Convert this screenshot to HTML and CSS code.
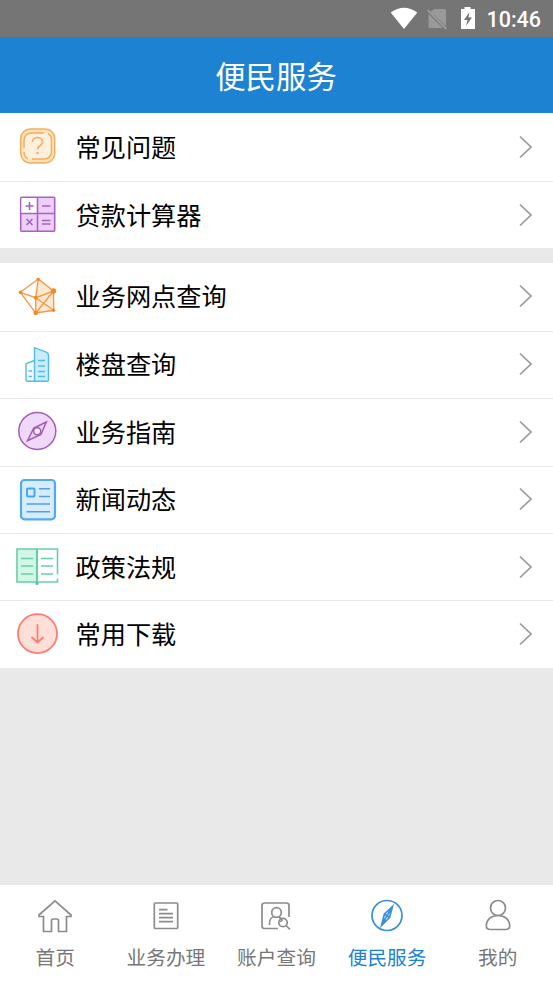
FILE: index.html
```html
<!DOCTYPE html>
<html lang="zh-CN">
<head>
<meta charset="utf-8">
<meta name="viewport" content="width=device-width, initial-scale=1">
<title>便民服务</title>
<link rel="stylesheet" href="styles.css">
</head>
<body>
<div class="app">
  <div class="status">
    <svg class="status-icons" viewBox="0 0 90 37">
      <path fill="#fff" d="M.7 12.500Q14 3 27.300 12.500L14 29z"/>
      <path fill="#999" d="M45 9h9.500q1.500 0 1.500 1.500V26L40 11.500zM38.500 14L53 28H40q-1.500 0-1.500-1.500z"/>
      <path d="M37.500 10l19 19" stroke="#999" stroke-width="2"/>
      <path fill="#fff" d="M74.500 7h6v2h4.500v20H71V9h3.500z"/>
      <path fill="#757575" d="M79.500 12L74 20h3.500l-1.500 6 6-8.500h-3.500z"/>
    </svg>
    <span class="clock">10:46</span>
  </div>
  <header class="header"><h1>便民服务</h1></header>

  <main class="content">
    <section class="group">
      <a class="row">
        <svg class="icon" viewBox="0 0 76 67.500" stroke="#f5ad62" stroke-width="1.500">
          <rect x="20.700" y="16" width="34" height="34" rx="9.500" fill="#ffe3b5"/>
          <path fill="#fff0de" d="M31 20h17q3.500 0 3.500 4v13q0 9-8 9H28q-4 0-4-4V28q0-8 7-8z" stroke="none"/>
          <path d="M24 35v-7q0-8 8-8h12M48 21q3.500 1 3.500 6v11q0 8-8 8H32M28 45.500q-4-1-4-6.500"/>
          <path d="M32.500 29c0-6 10-6 10 0 0 4-5 3.500-5 7.500" stroke-width="1.700"/>
          <circle cx="37.500" cy="40" r="1.200" fill="#f5ad62" stroke="none"/>
        </svg>
        <span class="label">常见问题</span>
        <svg class="chevron" viewBox="0 0 14 24"><path d="M1 1.500L12 12 1 22.500"/></svg>
      </a>
      <a class="row">
        <svg class="icon" viewBox="0 0 76 67.500" stroke="#ab60c2" stroke-width="1.600">
          <rect x="20.700" y="16.200" width="34" height="34" rx="1" fill="#edd0f8"/>
          <path d="M21.500 17h16v15.500h-16z" fill="#fff" stroke="none"/>
          <path d="M37.500 16v34M21 32.500h34"/>
          <path d="M25.500 25h8M29.500 21v8M42 25h8.500M26.500 38l6 6M32.500 38l-6 6M42 39.500h8.500M42 43h8.500"/>
        </svg>
        <span class="label">贷款计算器</span>
        <svg class="chevron" viewBox="0 0 14 24"><path d="M1 1.500L12 12 1 22.500"/></svg>
      </a>
    </section>

    <section class="group">
      <a class="row">
        <svg class="icon" viewBox="0 0 76 67.500" stroke="#f29b4b" stroke-width="1.400">
          <path d="M38.300 16l15.200 12 .2 19.300-18 2.700V34.700z" fill="#ffe8d2" stroke="none"/>
          <path d="M38.300 16L20.300 29.300 35.700 50l18-2.700-.2-19.300zL35.700 34.700V50M20.300 29.300l15.400 5.400L53.500 28 35.700 50M35.700 34.700l18 12.600"/>
          <g fill="#f58a20" stroke="none"><circle cx="38.300" cy="16.300" r="1.700"/><circle cx="20.500" cy="29.300" r="1.800"/><circle cx="53.500" cy="28" r="2.700"/><circle cx="35.700" cy="34.700" r="2"/><circle cx="35.700" cy="50" r="2.200"/><circle cx="53.500" cy="47.300" r="1.700"/></g>
        </svg>
        <span class="label">业务网点查询</span>
        <svg class="chevron" viewBox="0 0 14 24"><path d="M1 1.500L12 12 1 22.500"/></svg>
      </a>
      <a class="row">
        <svg class="icon" viewBox="0 0 76 67.500" stroke="#55b9ee" stroke-width="1.400">
          <path d="M34.500 29.500L26 32.700V49q0 1.300 1.300 1.300h7.200" fill="#f0faff"/>
          <path d="M34.500 50.300V16.700l11.700 4.500q2.300 1 2.300 3V49q0 1.300-1.300 1.300z" fill="#c8edff"/>
          <path d="M38 29.500h7M38 35h7M38 40.500h7M38 45.500h7M28.500 40h3.500M28.500 45.500h3.500"/>
        </svg>
        <span class="label">楼盘查询</span>
        <svg class="chevron" viewBox="0 0 14 24"><path d="M1 1.500L12 12 1 22.500"/></svg>
      </a>
      <a class="row">
        <svg class="icon" viewBox="0 0 76 67.500" stroke="#a35ab8" stroke-width="1.500">
          <circle cx="37.300" cy="33" r="18.500" fill="#f0d9f8"/>
          <path d="M46.300 24l-12.500 6-6.300 12.700L41 36.500z" fill="#ead0f3"/>
          <circle cx="37.200" cy="33.300" r="3.500" fill="#fff"/>
        </svg>
        <span class="label">业务指南</span>
        <svg class="chevron" viewBox="0 0 14 24"><path d="M1 1.500L12 12 1 22.500"/></svg>
      </a>
      <a class="row">
        <svg class="icon" viewBox="0 0 76 67.500" stroke="#539fed" stroke-width="1.500">
          <rect x="21" y="14" width="34" height="39.300" rx="3.500" fill="#d5edff" stroke="#55a9f3" stroke-width="2.200"/>
          <rect x="27" y="22.500" width="7.500" height="8" rx="1" stroke="#3ba9f5" stroke-width="1.900"/>
          <path d="M39 22.700h11M39 30.500h11M26.500 38h23.500M26.500 45.700h23.500"/>
        </svg>
        <span class="label">新闻动态</span>
        <svg class="chevron" viewBox="0 0 14 24"><path d="M1 1.500L12 12 1 22.500"/></svg>
      </a>
      <a class="row">
        <svg class="icon" viewBox="0 0 76 67.500" stroke="#67cfa7" stroke-width="1.600">
          <path d="M37 16H17v33h20z" fill="#d2f7e7"/>
          <path d="M37 16h20.500v25.500M57.500 45.500V49H37"/>
          <path d="M37 17v33" stroke-width="2.200"/>
          <path d="M21 25.500h12M21 33h12M21 41h12M41 25.500h12M41 33h12M41 41h12" stroke-width="1.500"/>
          <circle cx="37" cy="50.500" r="1.600" fill="#55c79a" stroke="none"/>
        </svg>
        <span class="label">政策法规</span>
        <svg class="chevron" viewBox="0 0 14 24"><path d="M1 1.500L12 12 1 22.500"/></svg>
      </a>
      <a class="row">
        <svg class="icon" viewBox="0 0 76 67.500" stroke="#f77f73" stroke-width="1.800">
          <circle cx="37.500" cy="33.700" r="19.500" fill="#ffdfd8"/>
          <path d="M37.500 25v17M32 37.500l5.500 5 5.500-5" stroke-linecap="round"/>
        </svg>
        <span class="label">常用下载</span>
        <svg class="chevron" viewBox="0 0 14 24"><path d="M1 1.500L12 12 1 22.500"/></svg>
      </a>
    </section>
  </main>

  <nav class="tabs">
    <a class="tab">
      <svg class="tab-icon" viewBox="0 0 44 40"><path d="M22 4.800L6 19v1.500h4.500v15h8v-11q0-1.500 1.500-1.500h4q1.500 0 1.500 1.500v11h8v-15H38V19z"/></svg>
      <span>首页</span>
    </a>
    <a class="tab">
      <svg class="tab-icon" viewBox="0 0 44 40"><rect x="10.300" y="7" width="23.400" height="25.500" rx="1"/><path d="M15 13.700h8.500M15 17.700h14M15 21.700h14M15 25.700h14"/></svg>
      <span>业务办理</span>
    </a>
    <a class="tab">
      <svg class="tab-icon" viewBox="0 0 44 40"><path d="M35 21V9.500Q35 7 32.500 7h-22Q8 7 8 9.500V30q0 2.500 2.500 2.500H24"/><circle cx="22.500" cy="16.500" r="4.800"/><path d="M15.500 29c-.5-5 2-8 5-8.500M25 21l3 2.500"/><circle cx="29" cy="26.500" r="4.200"/><path d="M32 29.500l4 4M26.500 26q.5-2 2.500-2"/></svg>
      <span>账户查询</span>
    </a>
    <a class="tab active">
      <svg class="tab-icon" viewBox="0 0 44 40"><circle cx="22" cy="19.500" r="15"/><path d="M27.500 10.500l-8 7.500-3 11.500 8-8zM19.500 18l5 3.500M27.500 10.500L22 19.700l-5.500 9.800"/></svg>
      <span>便民服务</span>
    </a>
    <a class="tab">
      <svg class="tab-icon" viewBox="0 0 44 40"><circle cx="22" cy="12" r="7.500"/><path d="M22 19.500c-7 0-11.700 4.500-11.700 10q0 4 4 4h15.400q4 0 4-4c0-5.500-4.700-10-11.700-10z"/></svg>
      <span>我的</span>
    </a>
  </nav>
</div>
</body>
</html>
```

FILE: styles.css
```css
* { box-sizing: border-box; }

body {
  margin: 0;
  font-family: "Noto Sans CJK SC", sans-serif;
  background: #e9e9e9;
}

.app {
  display: flex;
  flex-direction: column;
  height: 983px;
}

.status {
  flex: none;
  height: 37px;
  padding-right: 12px;
  display: flex;
  justify-content: flex-end;
  align-items: center;
  gap: 6px;
  background: #757575;
}

.status-icons { width: 90px; height: 37px; fill: none; }

.clock {
  font: 500 21.500px/37px Roboto, sans-serif;
  color: #fff;
  padding-top: 2px;
}

.header {
  flex: none;
  height: 76.400px;
  display: flex;
  align-items: center;
  justify-content: center;
  background: #1e82d2;
}

.header h1 {
  margin: 0;
  padding-right: 1px;
  font-size: 30.400px;
  font-weight: 400;
  line-height: 44px;
  color: #fff;
}

.content {
  flex: 1;
  display: flex;
  flex-direction: column;
  gap: 15px;
}

.group { background: #fff; }

.row {
  height: 67.450px;
  display: flex;
  align-items: center;
  padding-right: 20px;
}

.row + .row { border-top: 1px solid #e9e9e9; }

.icon { flex: none; width: 76px; height: 67.500px; margin: -1px 0 0; fill: none; }

.label {
  flex: 1;
  margin-left: -.5px;
  padding-bottom: 3px;
  font-size: 25.200px;
  line-height: 36px;
  color: #000;
}

.chevron {
  width: 14px;
  height: 24px;
  margin-top: -1px;
  fill: none;
  stroke: #999;
  stroke-width: 1.700;
}

.tabs {
  flex: none;
  height: 98.500px;
  display: flex;
  background: #fff;
}

.tab {
  flex: 1;
  display: flex;
  flex-direction: column;
  align-items: center;
  padding-top: 11.500px;
  font-size: 19.700px;
  line-height: 28px;
  color: #777;
}

.tab-icon {
  width: 44px;
  height: 40px;
  margin-bottom: 7px;
  fill: none;
  stroke: #8c8c8c;
  stroke-width: 1.700;
}

.active { color: #1e82d2; }
.active .tab-icon { stroke: #3a8fd6; }
```
